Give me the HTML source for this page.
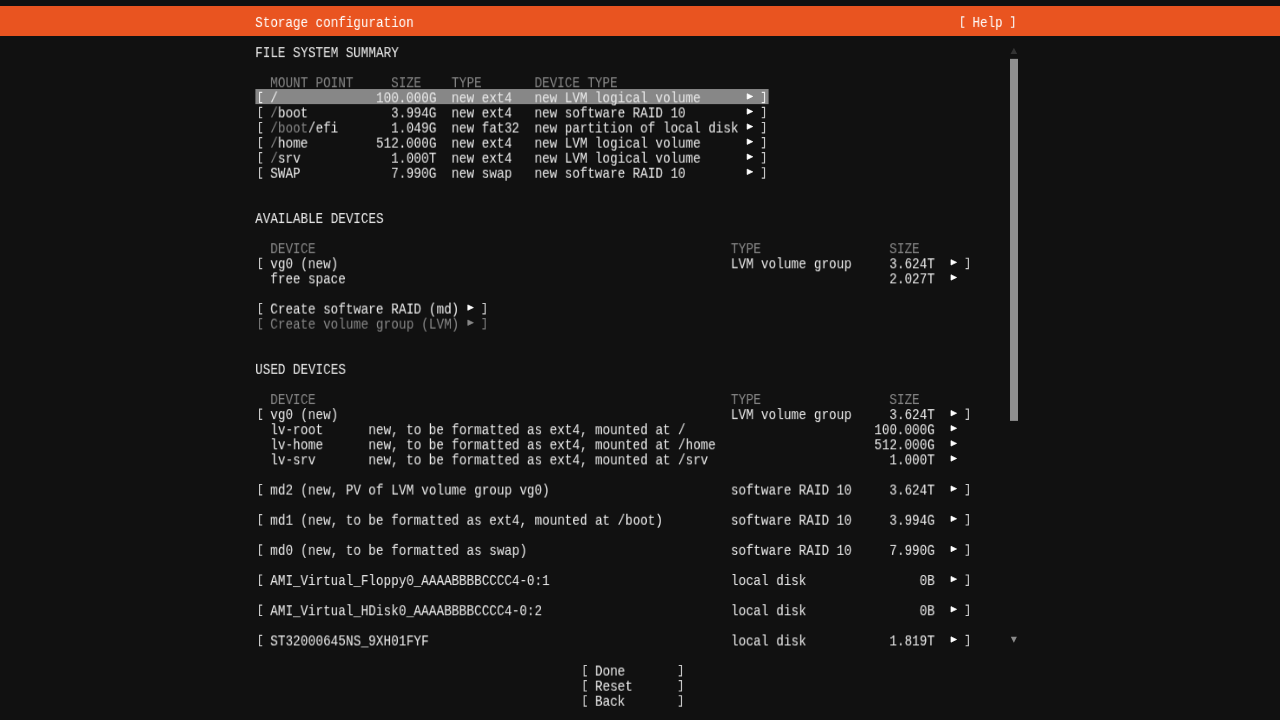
<!DOCTYPE html>
<html><head><meta charset="utf-8"><style>
html,body{margin:0;padding:0;background:#111111;width:1280px;height:720px;overflow:hidden;}
.t{position:absolute;left:0;top:0;white-space:pre;font-family:"Liberation Mono",monospace;font-size:14.500px;line-height:15px;height:15px;transform-origin:0 0;will-change:transform;}
svg{position:absolute;left:0;top:0;}
</style></head><body>

<svg width="1280" height="720" viewBox="0 0 1280 720"><rect x="0" y="6" width="1280" height="30" fill="#e95420"/><rect x="255.40" y="89.03" width="513.20" height="15.09" fill="#878787"/><rect x="1010" y="58.86" width="8" height="362.04" fill="#8f8f8f"/><path d="M1013.9 47.8 L1017.2 53.9 L1010.6 53.9 Z" fill="#333333"/><path d="M1010.8 636.7 L1016.9 636.7 L1013.85 642.8 Z" fill="#8a8a8a"/><path d="M961.15 16.30h3.25v1.15h-2.10v9.20h2.10v1.15h-3.25z" fill="#f8f8f8"/><path d="M1010.90 16.30h3.35v11.50h-3.35v-1.15h2.20v-9.20h-2.20z" fill="#f8f8f8"/><path d="M259.00 91.73h3.25v1.15h-2.10v9.20h2.10v1.15h-3.25z" fill="#ececec"/><path d="M761.75 91.73h3.35v11.50h-3.35v-1.15h2.20v-9.20h-2.20z" fill="#ececec"/><path d="M259.00 106.81h3.25v1.15h-2.10v9.20h2.10v1.15h-3.25z" fill="#c8c8c8"/><path d="M761.75 106.81h3.35v11.50h-3.35v-1.15h2.20v-9.20h-2.20z" fill="#c8c8c8"/><path d="M259.00 121.89h3.25v1.15h-2.10v9.20h2.10v1.15h-3.25z" fill="#c8c8c8"/><path d="M761.75 121.89h3.35v11.50h-3.35v-1.15h2.20v-9.20h-2.20z" fill="#c8c8c8"/><path d="M259.00 136.98h3.25v1.15h-2.10v9.20h2.10v1.15h-3.25z" fill="#c8c8c8"/><path d="M761.75 136.98h3.35v11.50h-3.35v-1.15h2.20v-9.20h-2.20z" fill="#c8c8c8"/><path d="M259.00 152.06h3.25v1.15h-2.10v9.20h2.10v1.15h-3.25z" fill="#c8c8c8"/><path d="M761.75 152.06h3.35v11.50h-3.35v-1.15h2.20v-9.20h-2.20z" fill="#c8c8c8"/><path d="M259.00 167.15h3.25v1.15h-2.10v9.20h2.10v1.15h-3.25z" fill="#c8c8c8"/><path d="M761.75 167.15h3.35v11.50h-3.35v-1.15h2.20v-9.20h-2.20z" fill="#c8c8c8"/><path d="M259.00 257.66h3.25v1.15h-2.10v9.20h2.10v1.15h-3.25z" fill="#c8c8c8"/><path d="M965.60 257.66h3.35v11.50h-3.35v-1.15h2.20v-9.20h-2.20z" fill="#c8c8c8"/><path d="M259.00 302.92h3.25v1.15h-2.10v9.20h2.10v1.15h-3.25z" fill="#c8c8c8"/><path d="M482.40 302.92h3.35v11.50h-3.35v-1.15h2.20v-9.20h-2.20z" fill="#c8c8c8"/><path d="M259.00 318.00h3.25v1.15h-2.10v9.20h2.10v1.15h-3.25z" fill="#747474"/><path d="M482.40 318.00h3.35v11.50h-3.35v-1.15h2.20v-9.20h-2.20z" fill="#747474"/><path d="M259.00 408.51h3.25v1.15h-2.10v9.20h2.10v1.15h-3.25z" fill="#c8c8c8"/><path d="M965.60 408.51h3.35v11.50h-3.35v-1.15h2.20v-9.20h-2.20z" fill="#c8c8c8"/><path d="M259.00 483.94h3.25v1.15h-2.10v9.20h2.10v1.15h-3.25z" fill="#c8c8c8"/><path d="M965.60 483.94h3.35v11.50h-3.35v-1.15h2.20v-9.20h-2.20z" fill="#c8c8c8"/><path d="M259.00 514.11h3.25v1.15h-2.10v9.20h2.10v1.15h-3.25z" fill="#c8c8c8"/><path d="M965.60 514.11h3.35v11.50h-3.35v-1.15h2.20v-9.20h-2.20z" fill="#c8c8c8"/><path d="M259.00 544.28h3.25v1.15h-2.10v9.20h2.10v1.15h-3.25z" fill="#c8c8c8"/><path d="M965.60 544.28h3.35v11.50h-3.35v-1.15h2.20v-9.20h-2.20z" fill="#c8c8c8"/><path d="M259.00 574.45h3.25v1.15h-2.10v9.20h2.10v1.15h-3.25z" fill="#c8c8c8"/><path d="M965.60 574.45h3.35v11.50h-3.35v-1.15h2.20v-9.20h-2.20z" fill="#c8c8c8"/><path d="M259.00 604.62h3.25v1.15h-2.10v9.20h2.10v1.15h-3.25z" fill="#c8c8c8"/><path d="M965.60 604.62h3.35v11.50h-3.35v-1.15h2.20v-9.20h-2.20z" fill="#c8c8c8"/><path d="M259.00 634.79h3.25v1.15h-2.10v9.20h2.10v1.15h-3.25z" fill="#c8c8c8"/><path d="M965.60 634.79h3.35v11.50h-3.35v-1.15h2.20v-9.20h-2.20z" fill="#c8c8c8"/><path d="M583.65 664.96h3.25v1.15h-2.10v9.20h2.10v1.15h-3.25z" fill="#c8c8c8"/><path d="M678.70 664.96h3.35v11.50h-3.35v-1.15h2.20v-9.20h-2.20z" fill="#c8c8c8"/><path d="M583.65 680.04h3.25v1.15h-2.10v9.20h2.10v1.15h-3.25z" fill="#c8c8c8"/><path d="M678.70 680.04h3.35v11.50h-3.35v-1.15h2.20v-9.20h-2.20z" fill="#c8c8c8"/><path d="M583.65 695.13h3.25v1.15h-2.10v9.20h2.10v1.15h-3.25z" fill="#c8c8c8"/><path d="M678.70 695.13h3.35v11.50h-3.35v-1.15h2.20v-9.20h-2.20z" fill="#c8c8c8"/><path d="M747.15 93.73L752.75 96.43L747.15 99.13Z" fill="#ffffff" stroke="#ffffff" stroke-width="0.7" stroke-linejoin="round"/><path d="M747.15 108.81L752.75 111.51L747.15 114.21Z" fill="#ffffff" stroke="#ffffff" stroke-width="0.7" stroke-linejoin="round"/><path d="M747.15 123.89L752.75 126.59L747.15 129.29Z" fill="#ffffff" stroke="#ffffff" stroke-width="0.7" stroke-linejoin="round"/><path d="M747.15 138.98L752.75 141.68L747.15 144.38Z" fill="#ffffff" stroke="#ffffff" stroke-width="0.7" stroke-linejoin="round"/><path d="M747.15 154.06L752.75 156.76L747.15 159.47Z" fill="#ffffff" stroke="#ffffff" stroke-width="0.7" stroke-linejoin="round"/><path d="M747.15 169.15L752.75 171.85L747.15 174.55Z" fill="#ffffff" stroke="#ffffff" stroke-width="0.7" stroke-linejoin="round"/><path d="M951.00 259.66L956.60 262.36L951.00 265.06Z" fill="#ffffff" stroke="#ffffff" stroke-width="0.7" stroke-linejoin="round"/><path d="M951.00 274.75L956.60 277.44L951.00 280.14Z" fill="#ffffff" stroke="#ffffff" stroke-width="0.7" stroke-linejoin="round"/><path d="M467.80 304.92L473.40 307.62L467.80 310.31Z" fill="#ffffff" stroke="#ffffff" stroke-width="0.7" stroke-linejoin="round"/><path d="M467.80 320.00L473.40 322.70L467.80 325.40Z" fill="#878787" stroke="#878787" stroke-width="0.7" stroke-linejoin="round"/><path d="M951.00 410.51L956.60 413.21L951.00 415.91Z" fill="#ffffff" stroke="#ffffff" stroke-width="0.7" stroke-linejoin="round"/><path d="M951.00 425.60L956.60 428.30L951.00 431.00Z" fill="#ffffff" stroke="#ffffff" stroke-width="0.7" stroke-linejoin="round"/><path d="M951.00 440.68L956.60 443.38L951.00 446.08Z" fill="#ffffff" stroke="#ffffff" stroke-width="0.7" stroke-linejoin="round"/><path d="M951.00 455.77L956.60 458.47L951.00 461.17Z" fill="#ffffff" stroke="#ffffff" stroke-width="0.7" stroke-linejoin="round"/><path d="M951.00 485.94L956.60 488.64L951.00 491.34Z" fill="#ffffff" stroke="#ffffff" stroke-width="0.7" stroke-linejoin="round"/><path d="M951.00 516.11L956.60 518.81L951.00 521.50Z" fill="#ffffff" stroke="#ffffff" stroke-width="0.7" stroke-linejoin="round"/><path d="M951.00 546.28L956.60 548.98L951.00 551.68Z" fill="#ffffff" stroke="#ffffff" stroke-width="0.7" stroke-linejoin="round"/><path d="M951.00 576.45L956.60 579.15L951.00 581.85Z" fill="#ffffff" stroke="#ffffff" stroke-width="0.7" stroke-linejoin="round"/><path d="M951.00 606.62L956.60 609.32L951.00 612.02Z" fill="#ffffff" stroke="#ffffff" stroke-width="0.7" stroke-linejoin="round"/><path d="M951.00 636.79L956.60 639.49L951.00 642.19Z" fill="#ffffff" stroke="#ffffff" stroke-width="0.7" stroke-linejoin="round"/></svg>
<div class="t" style="color:#ffffff;transform:matrix(0.86767,0,0,1,255.200,15.900)">Storage configuration</div>
<div class="t" style="color:#ffffff;transform:matrix(0.86767,0,0,1,972.450,15.900)">Help</div>
<div class="t" style="color:#ebebeb;transform:matrix(0.86767,0,0,1,255.200,46.070)">FILE SYSTEM SUMMARY</div>
<div class="t" style="color:#878787;transform:matrix(0.86767,0,0,1,270.300,76.240)">MOUNT POINT</div>
<div class="t" style="color:#878787;transform:matrix(0.86767,0,0,1,391.100,76.240)">SIZE</div>
<div class="t" style="color:#878787;transform:matrix(0.86767,0,0,1,451.500,76.240)">TYPE</div>
<div class="t" style="color:#878787;transform:matrix(0.86767,0,0,1,534.550,76.240)">DEVICE TYPE</div>
<div class="t" style="color:#ebebeb;transform:matrix(0.86767,0,0,1,270.300,91.325)">/</div>
<div class="t" style="color:#ebebeb;transform:matrix(0.86767,0,0,1,376.000,91.325)">100.000G</div>
<div class="t" style="color:#ebebeb;transform:matrix(0.86767,0,0,1,451.500,91.325)">new ext4</div>
<div class="t" style="color:#ebebeb;transform:matrix(0.86767,0,0,1,534.550,91.325)">new LVM logical volume</div>
<div class="t" style="color:#878787;transform:matrix(0.86767,0,0,1,270.300,106.410)">/</div>
<div class="t" style="color:#ebebeb;transform:matrix(0.86767,0,0,1,277.850,106.410)">boot</div>
<div class="t" style="color:#ebebeb;transform:matrix(0.86767,0,0,1,391.100,106.410)">3.994G</div>
<div class="t" style="color:#ebebeb;transform:matrix(0.86767,0,0,1,451.500,106.410)">new ext4</div>
<div class="t" style="color:#ebebeb;transform:matrix(0.86767,0,0,1,534.550,106.410)">new software RAID 10</div>
<div class="t" style="color:#878787;transform:matrix(0.86767,0,0,1,270.300,121.495)">/boot</div>
<div class="t" style="color:#ebebeb;transform:matrix(0.86767,0,0,1,308.050,121.495)">/efi</div>
<div class="t" style="color:#ebebeb;transform:matrix(0.86767,0,0,1,391.100,121.495)">1.049G</div>
<div class="t" style="color:#ebebeb;transform:matrix(0.86767,0,0,1,451.500,121.495)">new fat32</div>
<div class="t" style="color:#ebebeb;transform:matrix(0.86767,0,0,1,534.550,121.495)">new partition of local disk</div>
<div class="t" style="color:#878787;transform:matrix(0.86767,0,0,1,270.300,136.580)">/</div>
<div class="t" style="color:#ebebeb;transform:matrix(0.86767,0,0,1,277.850,136.580)">home</div>
<div class="t" style="color:#ebebeb;transform:matrix(0.86767,0,0,1,376.000,136.580)">512.000G</div>
<div class="t" style="color:#ebebeb;transform:matrix(0.86767,0,0,1,451.500,136.580)">new ext4</div>
<div class="t" style="color:#ebebeb;transform:matrix(0.86767,0,0,1,534.550,136.580)">new LVM logical volume</div>
<div class="t" style="color:#878787;transform:matrix(0.86767,0,0,1,270.300,151.665)">/</div>
<div class="t" style="color:#ebebeb;transform:matrix(0.86767,0,0,1,277.850,151.665)">srv</div>
<div class="t" style="color:#ebebeb;transform:matrix(0.86767,0,0,1,391.100,151.665)">1.000T</div>
<div class="t" style="color:#ebebeb;transform:matrix(0.86767,0,0,1,451.500,151.665)">new ext4</div>
<div class="t" style="color:#ebebeb;transform:matrix(0.86767,0,0,1,534.550,151.665)">new LVM logical volume</div>
<div class="t" style="color:#ebebeb;transform:matrix(0.86767,0,0,1,270.300,166.750)">SWAP</div>
<div class="t" style="color:#ebebeb;transform:matrix(0.86767,0,0,1,391.100,166.750)">7.990G</div>
<div class="t" style="color:#ebebeb;transform:matrix(0.86767,0,0,1,451.500,166.750)">new swap</div>
<div class="t" style="color:#ebebeb;transform:matrix(0.86767,0,0,1,534.550,166.750)">new software RAID 10</div>
<div class="t" style="color:#ebebeb;transform:matrix(0.86767,0,0,1,255.200,212.005)">AVAILABLE DEVICES</div>
<div class="t" style="color:#878787;transform:matrix(0.86767,0,0,1,270.300,242.175)">DEVICE</div>
<div class="t" style="color:#878787;transform:matrix(0.86767,0,0,1,730.850,242.175)">TYPE</div>
<div class="t" style="color:#878787;transform:matrix(0.86767,0,0,1,889.400,242.175)">SIZE</div>
<div class="t" style="color:#ebebeb;transform:matrix(0.86767,0,0,1,270.300,257.260)">vg0 (new)</div>
<div class="t" style="color:#ebebeb;transform:matrix(0.86767,0,0,1,730.850,257.260)">LVM volume group</div>
<div class="t" style="color:#ebebeb;transform:matrix(0.86767,0,0,1,889.400,257.260)">3.624T</div>
<div class="t" style="color:#ebebeb;transform:matrix(0.86767,0,0,1,270.300,272.345)">free space</div>
<div class="t" style="color:#ebebeb;transform:matrix(0.86767,0,0,1,889.400,272.345)">2.027T</div>
<div class="t" style="color:#ebebeb;transform:matrix(0.86767,0,0,1,270.300,302.515)">Create software RAID (md)</div>
<div class="t" style="color:#878787;transform:matrix(0.86767,0,0,1,270.300,317.600)">Create volume group (LVM)</div>
<div class="t" style="color:#ebebeb;transform:matrix(0.86767,0,0,1,255.200,362.855)">USED DEVICES</div>
<div class="t" style="color:#878787;transform:matrix(0.86767,0,0,1,270.300,393.025)">DEVICE</div>
<div class="t" style="color:#878787;transform:matrix(0.86767,0,0,1,730.850,393.025)">TYPE</div>
<div class="t" style="color:#878787;transform:matrix(0.86767,0,0,1,889.400,393.025)">SIZE</div>
<div class="t" style="color:#ebebeb;transform:matrix(0.86767,0,0,1,270.300,408.110)">vg0 (new)</div>
<div class="t" style="color:#ebebeb;transform:matrix(0.86767,0,0,1,730.850,408.110)">LVM volume group</div>
<div class="t" style="color:#ebebeb;transform:matrix(0.86767,0,0,1,889.400,408.110)">3.624T</div>
<div class="t" style="color:#ebebeb;transform:matrix(0.86767,0,0,1,270.300,423.195)">lv-root</div>
<div class="t" style="color:#ebebeb;transform:matrix(0.86767,0,0,1,368.450,423.195)">new, to be formatted as ext4, mounted at /</div>
<div class="t" style="color:#ebebeb;transform:matrix(0.86767,0,0,1,874.300,423.195)">100.000G</div>
<div class="t" style="color:#ebebeb;transform:matrix(0.86767,0,0,1,270.300,438.280)">lv-home</div>
<div class="t" style="color:#ebebeb;transform:matrix(0.86767,0,0,1,368.450,438.280)">new, to be formatted as ext4, mounted at /home</div>
<div class="t" style="color:#ebebeb;transform:matrix(0.86767,0,0,1,874.300,438.280)">512.000G</div>
<div class="t" style="color:#ebebeb;transform:matrix(0.86767,0,0,1,270.300,453.365)">lv-srv</div>
<div class="t" style="color:#ebebeb;transform:matrix(0.86767,0,0,1,368.450,453.365)">new, to be formatted as ext4, mounted at /srv</div>
<div class="t" style="color:#ebebeb;transform:matrix(0.86767,0,0,1,889.400,453.365)">1.000T</div>
<div class="t" style="color:#ebebeb;transform:matrix(0.86767,0,0,1,270.300,483.535)">md2 (new, PV of LVM volume group vg0)</div>
<div class="t" style="color:#ebebeb;transform:matrix(0.86767,0,0,1,730.850,483.535)">software RAID 10</div>
<div class="t" style="color:#ebebeb;transform:matrix(0.86767,0,0,1,889.400,483.535)">3.624T</div>
<div class="t" style="color:#ebebeb;transform:matrix(0.86767,0,0,1,270.300,513.705)">md1 (new, to be formatted as ext4, mounted at /boot)</div>
<div class="t" style="color:#ebebeb;transform:matrix(0.86767,0,0,1,730.850,513.705)">software RAID 10</div>
<div class="t" style="color:#ebebeb;transform:matrix(0.86767,0,0,1,889.400,513.705)">3.994G</div>
<div class="t" style="color:#ebebeb;transform:matrix(0.86767,0,0,1,270.300,543.875)">md0 (new, to be formatted as swap)</div>
<div class="t" style="color:#ebebeb;transform:matrix(0.86767,0,0,1,730.850,543.875)">software RAID 10</div>
<div class="t" style="color:#ebebeb;transform:matrix(0.86767,0,0,1,889.400,543.875)">7.990G</div>
<div class="t" style="color:#ebebeb;transform:matrix(0.86767,0,0,1,270.300,574.045)">AMI_Virtual_Floppy0_AAAABBBBCCCC4-0:1</div>
<div class="t" style="color:#ebebeb;transform:matrix(0.86767,0,0,1,730.850,574.045)">local disk</div>
<div class="t" style="color:#ebebeb;transform:matrix(0.86767,0,0,1,919.600,574.045)">0B</div>
<div class="t" style="color:#ebebeb;transform:matrix(0.86767,0,0,1,270.300,604.215)">AMI_Virtual_HDisk0_AAAABBBBCCCC4-0:2</div>
<div class="t" style="color:#ebebeb;transform:matrix(0.86767,0,0,1,730.850,604.215)">local disk</div>
<div class="t" style="color:#ebebeb;transform:matrix(0.86767,0,0,1,919.600,604.215)">0B</div>
<div class="t" style="color:#ebebeb;transform:matrix(0.86767,0,0,1,270.300,634.385)">ST32000645NS_9XH01FYF</div>
<div class="t" style="color:#ebebeb;transform:matrix(0.86767,0,0,1,730.850,634.385)">local disk</div>
<div class="t" style="color:#ebebeb;transform:matrix(0.86767,0,0,1,889.400,634.385)">1.819T</div>
<div class="t" style="color:#ebebeb;transform:matrix(0.86767,0,0,1,594.950,664.555)">Done</div>
<div class="t" style="color:#ebebeb;transform:matrix(0.86767,0,0,1,594.950,679.640)">Reset</div>
<div class="t" style="color:#ebebeb;transform:matrix(0.86767,0,0,1,594.950,694.725)">Back</div>
</body></html>
